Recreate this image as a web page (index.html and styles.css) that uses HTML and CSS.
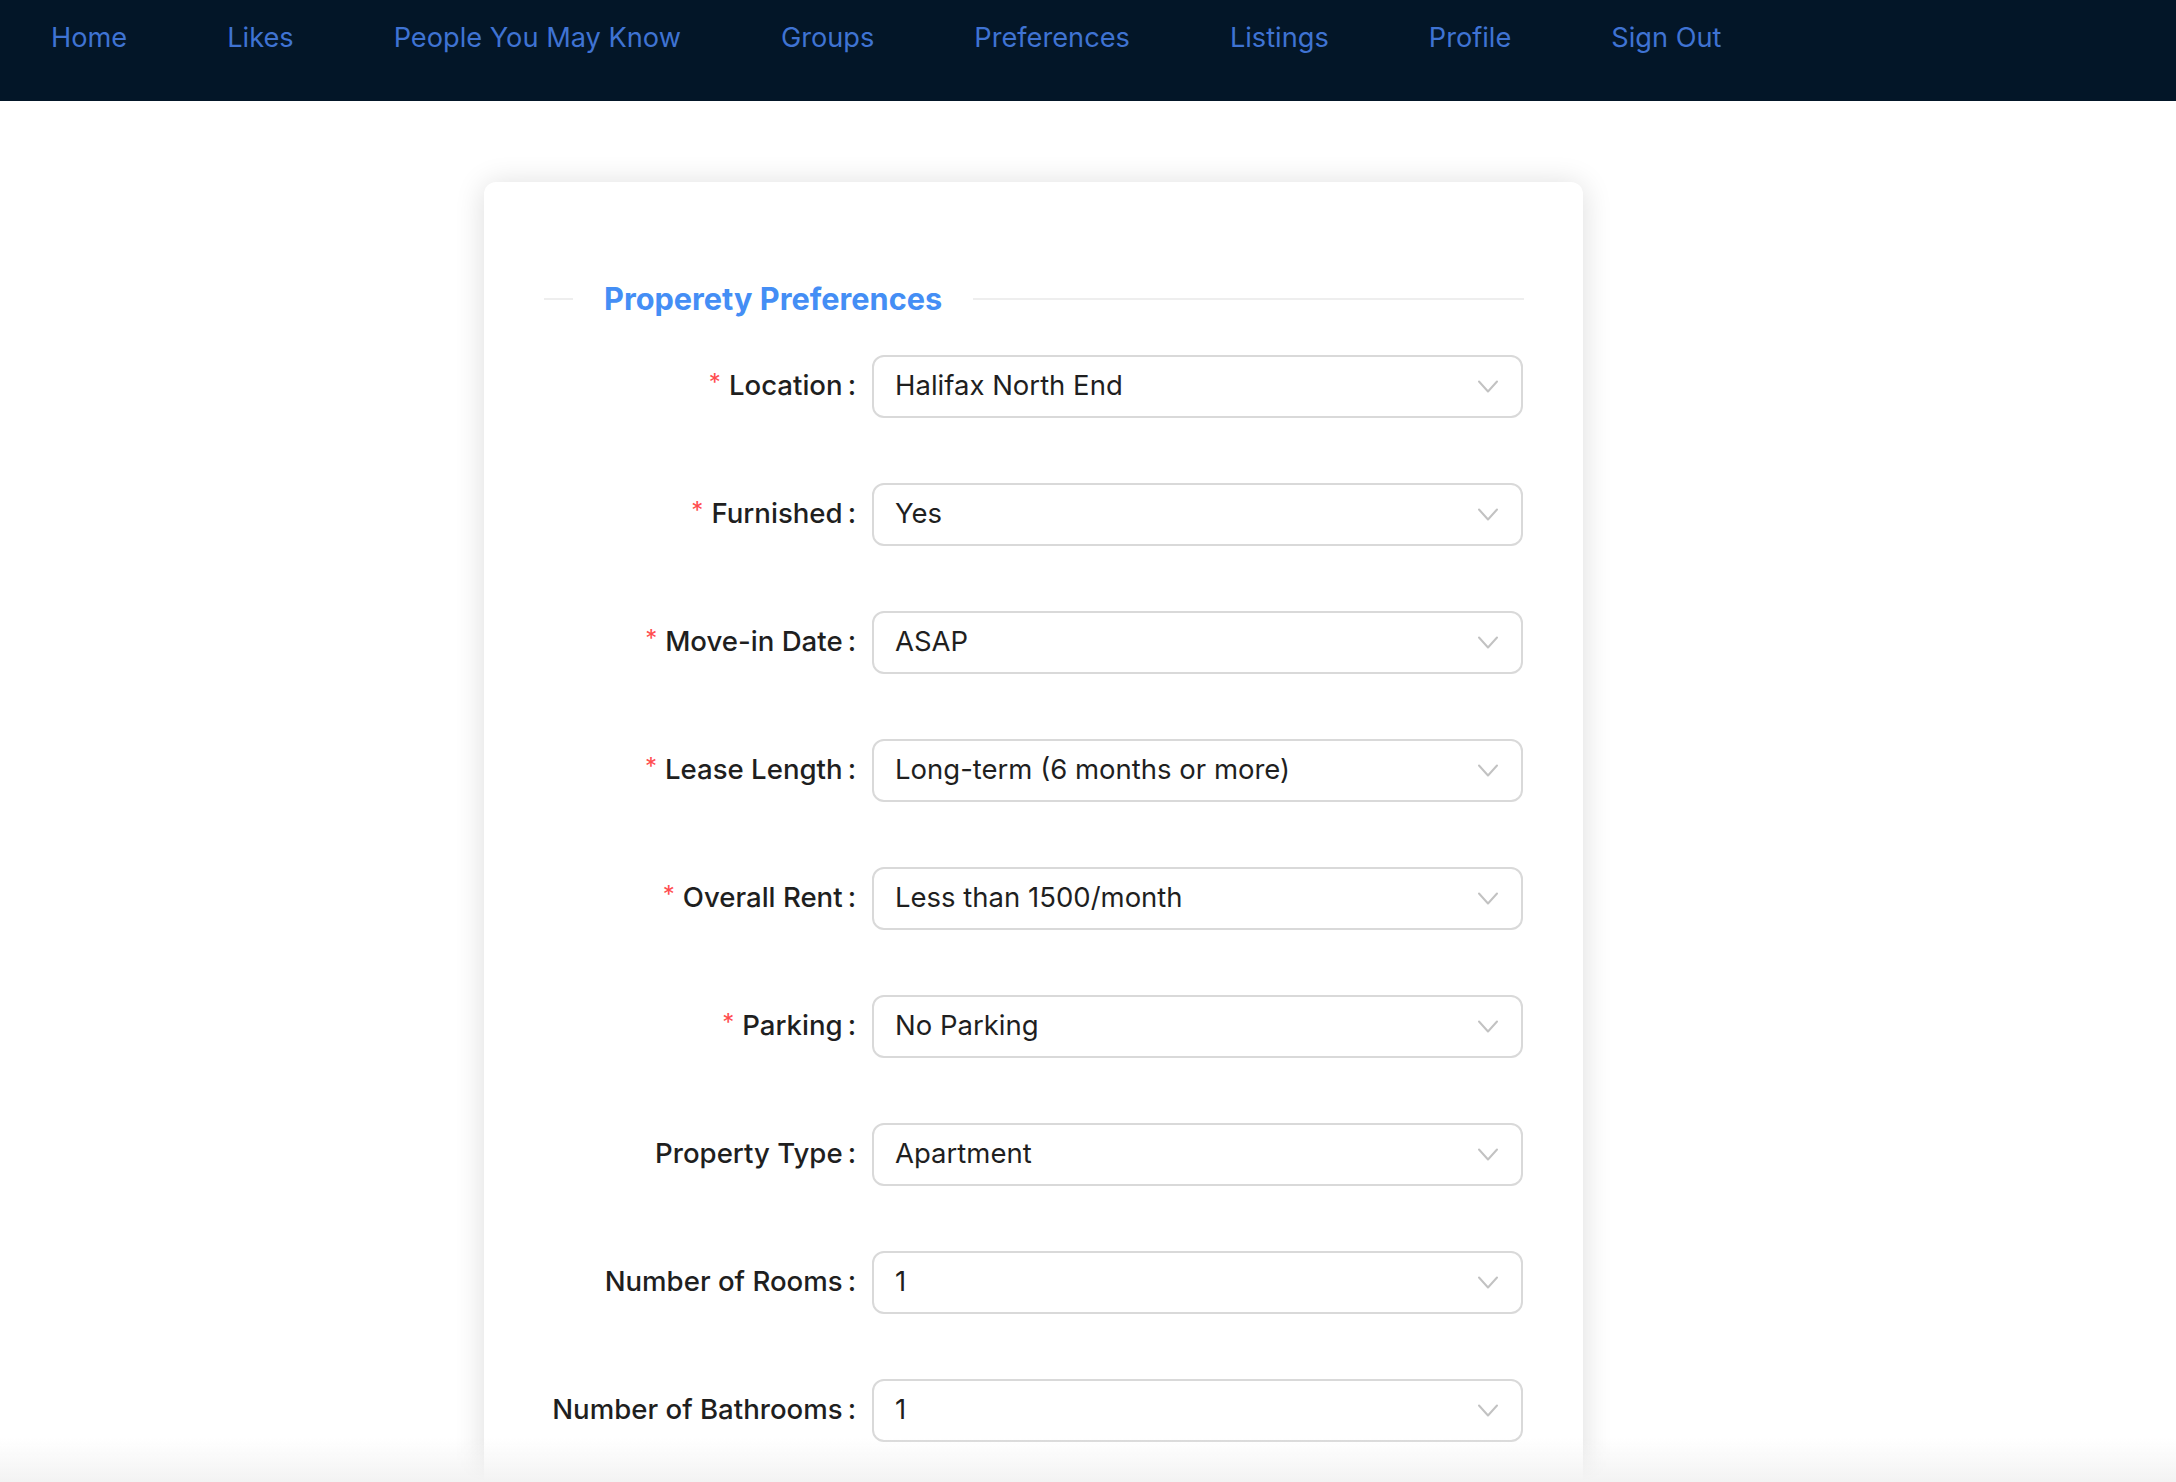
FILE: index.html
```html
<!DOCTYPE html>
<html lang="en">
<head>
<meta charset="utf-8">
<title>Preferences</title>
<link rel="stylesheet" href="styles.css">
</head>
<body>
<nav class="topnav">
  <a class="navlink" href="#">Home</a>
  <a class="navlink" href="#">Likes</a>
  <a class="navlink" href="#">People You May Know</a>
  <a class="navlink" href="#">Groups</a>
  <a class="navlink" href="#">Preferences</a>
  <a class="navlink" href="#">Listings</a>
  <a class="navlink" href="#">Profile</a>
  <a class="navlink" href="#">Sign Out</a>
</nav>
<main class="page">
  <section class="card">
    <div class="divider">
      <span class="divider-line divider-before"></span>
      <span class="divider-text">Properety Preferences</span>
      <span class="divider-line divider-after"></span>
    </div>
    <div class="form">
      <div class="row">
        <label class="label required">Location</label>
        <div class="select"><span class="value">Halifax North End</span><svg class="arrow" viewBox="0 0 20 13" width="20" height="13"><polyline points="1,1.5 10,11.5 19,1.5"/></svg></div>
      </div>
      <div class="row">
        <label class="label required">Furnished</label>
        <div class="select"><span class="value">Yes</span><svg class="arrow" viewBox="0 0 20 13" width="20" height="13"><polyline points="1,1.5 10,11.5 19,1.5"/></svg></div>
      </div>
      <div class="row">
        <label class="label required">Move-in Date</label>
        <div class="select"><span class="value">ASAP</span><svg class="arrow" viewBox="0 0 20 13" width="20" height="13"><polyline points="1,1.5 10,11.5 19,1.5"/></svg></div>
      </div>
      <div class="row">
        <label class="label required">Lease Length</label>
        <div class="select"><span class="value">Long-term (6 months or more)</span><svg class="arrow" viewBox="0 0 20 13" width="20" height="13"><polyline points="1,1.5 10,11.5 19,1.5"/></svg></div>
      </div>
      <div class="row">
        <label class="label required">Overall Rent</label>
        <div class="select"><span class="value">Less than 1500/month</span><svg class="arrow" viewBox="0 0 20 13" width="20" height="13"><polyline points="1,1.5 10,11.5 19,1.5"/></svg></div>
      </div>
      <div class="row">
        <label class="label required">Parking</label>
        <div class="select"><span class="value">No Parking</span><svg class="arrow" viewBox="0 0 20 13" width="20" height="13"><polyline points="1,1.5 10,11.5 19,1.5"/></svg></div>
      </div>
      <div class="row">
        <label class="label">Property Type</label>
        <div class="select"><span class="value">Apartment</span><svg class="arrow" viewBox="0 0 20 13" width="20" height="13"><polyline points="1,1.5 10,11.5 19,1.5"/></svg></div>
      </div>
      <div class="row">
        <label class="label">Number of Rooms</label>
        <div class="select"><span class="value">1</span><svg class="arrow" viewBox="0 0 20 13" width="20" height="13"><polyline points="1,1.5 10,11.5 19,1.5"/></svg></div>
      </div>
      <div class="row">
        <label class="label">Number of Bathrooms</label>
        <div class="select"><span class="value">1</span><svg class="arrow" viewBox="0 0 20 13" width="20" height="13"><polyline points="1,1.5 10,11.5 19,1.5"/></svg></div>
      </div>
    </div>
  </section>
</main>
<div class="bottom-fade"></div>
</body>
</html>
```

FILE: styles.css
```css
* { box-sizing: border-box; }
html, body { margin: 0; padding: 0; }
body {
  background: #ffffff;
  font-family: Inter, "Noto Sans", "Liberation Sans", sans-serif;
  color: rgba(0, 0, 0, 0.88);
  overflow: hidden;
  height: 1482px;
}
.topnav {
  height: 101px;
  background: #031628;
  display: flex;
  align-items: flex-start;
  gap: 100px;
  padding: 20px 0 0 51px;
}
.navlink {
  color: #3f73d3;
  text-decoration: none;
  font-size: 27.2px;
  line-height: 36px;
  white-space: nowrap;
}
.page {
  padding: 81px 0 0 484px;
}
.card {
  width: 1099px;
  background: #ffffff;
  border-radius: 12px;
  box-shadow: 0 2px 30px rgba(0, 0, 0, 0.14);
  padding: 93px 59px 200px 60px;
}
.divider {
  display: flex;
  align-items: center;
  height: 48px;
}
.divider-line {
  height: 2px;
  background: #eeeeee;
}
.divider-before { width: 29px; }
.divider-after { flex: 1; }
.divider-text {
  color: #448ef5;
  font-size: 30.7px;
  font-weight: 700;
  line-height: 48px;
  padding: 0 31px;
  white-space: nowrap;
}
.form {
  padding-top: 32px;
  display: flex;
  flex-direction: column;
  gap: 65px;
}
.row {
  display: grid;
  grid-template-columns: 328px 651px;
  align-items: center;
}
.label {
  text-align: right;
  font-size: 27.6px;
  font-weight: 500;
  color: #1f1f1f;
  padding: 0 16px 3px 0;
  white-space: nowrap;
}
.label::after {
  content: ":";
  margin-left: 5px;
}
.required::before {
  content: "*";
  color: #ff4d4f;
  font-weight: 400;
  font-size: 24px;
  margin-right: 8px;
  position: relative;
  top: -4px;
}
.select {
  height: 63px;
  border: 2px solid #d9d9d9;
  border-radius: 12px;
  display: flex;
  align-items: center;
  justify-content: space-between;
  padding: 0 23px 0 21px;
}
.value {
  font-size: 27.5px;
  color: #1f1f1f;
  white-space: nowrap;
  padding-bottom: 3px;
}
.arrow {
  fill: none;
  stroke: #c2c2c2;
  stroke-width: 2;
  stroke-linecap: round;
  stroke-linejoin: round;
}
.bottom-fade {
  position: fixed;
  left: 0;
  right: 0;
  bottom: 0;
  height: 44px;
  background: linear-gradient(to bottom, rgba(243, 243, 243, 0), rgba(243, 243, 243, 1));
  pointer-events: none;
}
```
